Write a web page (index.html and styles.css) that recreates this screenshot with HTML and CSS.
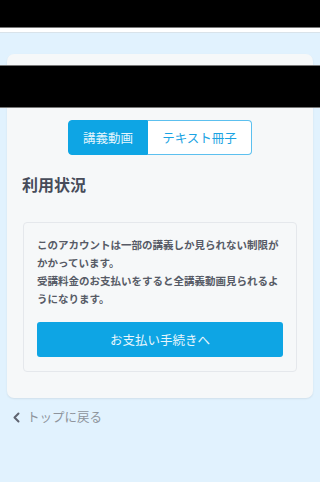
FILE: index.html
```html
<!DOCTYPE html>
<html lang="ja">
<head>
    <meta charset="UTF-8">
    <meta name="viewport" content="width=device-width, initial-scale=1.0">
    <title>利用状況</title>
    <link rel="stylesheet" href="styles.css">
</head>
<body>
    <!-- Header (redacted) -->
    <header class="header">
        <div class="redact redact-top"></div>
    </header>

    <main class="page">
        <div class="card">
            <div class="redact redact-title"></div>

            <!-- Tabs -->
            <div class="tabs">
                <button class="tab active">講義動画</button>
                <button class="tab">テキスト冊子</button>
            </div>

            <h2 class="section-title">利用状況</h2>

            <div class="notice">
                <p class="notice-text">このアカウントは一部の講義しか見られない制限がかかっています。<br>受講料金のお支払いをすると全講義動画見られるようになります。</p>
                <button class="pay-btn">お支払い手続きへ</button>
            </div>
        </div>

        <a class="back-link" href="#">
            <svg class="back-icon" width="9" height="11" viewBox="0 0 9 11">
                <path d="M6.5 1.5 L2.5 5.5 L6.5 9.5" fill="none" stroke="#5f6470" stroke-width="2" stroke-linecap="round" stroke-linejoin="round"/>
            </svg>
            トップに戻る
        </a>
    </main>
</body>
</html>
```

FILE: styles.css
```css
body {
    margin: 0;
    font-family: "Noto Sans CJK JP", "Noto Sans", sans-serif;
    background-color: #e1f2fe;
    height: 482px;
    overflow: hidden;
}
.header {
    height: 32px;
    background: #fff;
    border-bottom: 1px solid #d9e3ea;
}
.redact {
    position: absolute;
    left: 0;
    width: 320px;
    background: #000;
}
.redact-top {
    top: 0;
    height: 27px;
    border-bottom: 1px solid #777;
}
.redact-title {
    top: 65px;
    height: 41px;
    border-top: 1px solid #777;
    border-bottom: 1px solid #777;
}
.page {
    padding: 21px 7px 0;
}
.card {
    background: #f6f8f9;
    border-radius: 7px;
    padding: 66px 16px 26px;
    box-shadow: 0 1px 2px rgba(0, 0, 0, 0.08);
}
.tabs {
    display: flex;
    justify-content: center;
}
.tab {
    height: 35px;
    font-family: inherit;
    font-size: 12.5px;
    border: 1px solid #5cc0ef;
    background: #fff;
    color: #1aa3e3;
    padding: 0;
    margin: 0;
    cursor: pointer;
}
.tab:first-child {
    width: 80px;
    border-radius: 4px 0 0 4px;
}
.tab:last-child {
    width: 104px;
    border-left: none;
    border-radius: 0 4px 4px 0;
}
.tab.active {
    background: #0ea5e4;
    border-color: #0ea5e4;
    color: #e4f5fd;
}
.section-title {
    margin: 17px 0 0 -1px;
    font-size: 16px;
    line-height: 24px;
    font-weight: bold;
    color: #474c5a;
}
.notice {
    margin-top: 26px;
    border: 1px solid #e5e8ec;
    border-radius: 4px;
    padding: 13px 13px 14px;
}
.notice-text {
    margin: 0;
    font-size: 10.5px;
    line-height: 18px;
    font-weight: bold;
    color: #575b66;
}
.pay-btn {
    display: block;
    width: 100%;
    height: 35px;
    margin-top: 14px;
    border: none;
    border-radius: 3px;
    background: #0ea5e4;
    color: #e8f6fd;
    font-family: inherit;
    font-size: 12.5px;
    cursor: pointer;
}
.back-link {
    display: flex;
    align-items: center;
    gap: 6px;
    margin: 9px 0 0 5px;
    font-size: 12.5px;
    line-height: 20px;
    color: #8e949c;
    text-decoration: none;
}
```
